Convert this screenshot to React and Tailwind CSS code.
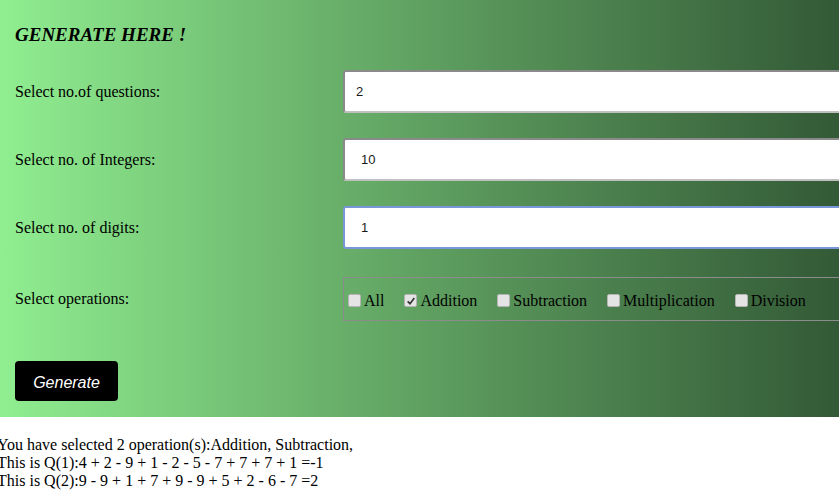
import React, { useState } from 'react';

const serif = { fontFamily: '"Liberation Serif", "Times New Roman", serif' };

const Field = ({ label, value, focused, pad }) => (
  <div className="flex items-center h-[43px]">
    <label className="w-[328px] shrink-0 text-[16px] text-black">{label}</label>
    <input
      defaultValue={value}
      className={`h-full w-[560px] shrink-0 bg-white rounded-[3px] ${pad} text-[13px] text-[#1a1a1a] outline-none ${
        focused ? 'border-2 border-[#7896d8]' : 'border-2 border-t-[#8a8a8a] border-l-[#8a8a8a] border-r-[#c8c8c8] border-b-[#c0c0c0]'
      }`}
      style={{ fontFamily: '"Liberation Sans", Arial, sans-serif' }}
    />
  </div>
);

const ops = ['All', 'Addition', 'Subtraction', 'Multiplication', 'Division'];

const Box = ({ on }) => (
  <span className="w-[13px] h-[13px] mr-[3px] border border-[#b4b4b4] bg-[#e4e4e4] rounded-[2px] flex items-center justify-center">
    {on && (
      <svg viewBox="0 0 12 12" className="w-[10px] h-[10px]">
        <path d="M2 6.5 L4.8 9.2 L10 2.5" fill="none" stroke="#333" strokeWidth="2" />
      </svg>
    )}
  </span>
);

const App = () => {
  const [checked, setChecked] = useState({ Addition: true });

  return (
    <div className="w-[839px] h-[502px] overflow-hidden bg-white" style={serif}>
      <div className="bg-gradient-to-r from-[#90ee90] to-[#335a36] pl-[15px] pt-[24px] pb-[15px] h-[417px]">
        <h2 className="text-[19px] font-bold italic text-black leading-[22px]">GENERATE HERE !</h2>
        <div className="mt-[24px] flex flex-col gap-[25px]">
          <Field label="Select no.of questions:" value="2" pad="pl-[11px]" />
          <Field label="Select no. of Integers:" value="10" pad="pl-[16px]" />
          <Field label="Select no. of digits:" value="1" pad="pl-[16px]" focused />
        </div>
        <div className="mt-[28px] flex items-center h-[44px]">
          <span className="w-[328px] shrink-0 text-[16px] text-black">Select operations:</span>
          <div className="h-full w-[560px] shrink-0 border border-[#8c8c8c] flex items-center pl-[4px] pt-[3px] gap-[20px] text-[16px] text-black">
            {ops.map((op) => (
              <label
                key={op}
                className="flex items-center cursor-pointer"
                onClick={() => setChecked({ ...checked, [op]: !checked[op] })}
              >
                <Box on={!!checked[op]} />
                <span>{op}</span>
              </label>
            ))}
          </div>
        </div>
        <button
          className="mt-[40px] w-[103px] h-[40px] pt-[3px] bg-black text-white italic text-[16px] rounded-[4px]"
          style={{ fontFamily: '"Liberation Sans", Arial, sans-serif' }}
        >
          Generate
        </button>
      </div>
      <div className="ml-[-3px] mt-[19px] text-[16px] leading-[18px] text-black">
        <div>You have selected 2 operation(s):Addition, Subtraction,</div>
        <div>This is Q(1):4 + 2 - 9 + 1 - 2 - 5 - 7 + 7 + 7 + 1 =-1</div>
        <div>This is Q(2):9 - 9 + 1 + 7 + 9 - 9 + 5 + 2 - 6 - 7 =2</div>
      </div>
    </div>
  );
};

export default App;
